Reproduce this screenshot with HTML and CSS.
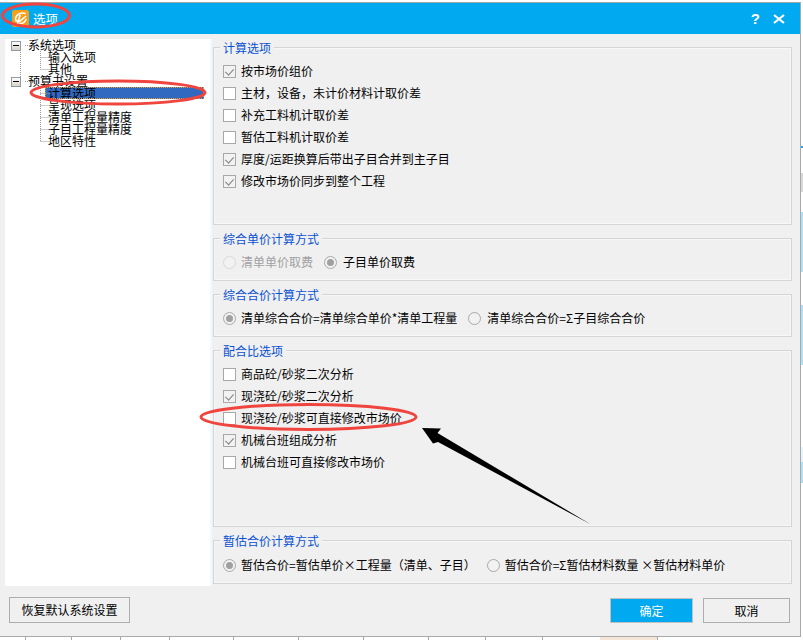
FILE: index.html
```html
<!DOCTYPE html>
<html lang="zh-CN">
<head>
<meta charset="utf-8">
<title>选项</title>
<link rel="stylesheet" href="styles.css">
</head>
<body>
<div class="page">
  <div class="upper">
    <div class="window">
      <header class="titlebar">
        <svg class="appicon" width="17" height="17" viewBox="0 0 17 17">
          <rect width="17" height="17" rx="2.500" fill="#f9a01b"/>
          <path d="M13 3.500C9 2 4 4.500 3.500 8.500c-.3 2.500 2.500 3.500 4.500 2.500l5.500-4.500M8 5.500L5.500 14M14 9.500c-1 2.500-3.500 4-6 4" fill="none" stroke="#fff" stroke-width="1.600" stroke-linecap="round"/>
        </svg>
        <span class="title">选项</span>
        <span class="help">?</span>
        <svg class="close" width="12" height="10" viewBox="0 0 12 10">
          <path d="M1 1l10 8M11 1L1 9" stroke="#fff" stroke-width="2.200" fill="none"/>
        </svg>
      </header>

      <div class="main">
        <nav class="tree">
          <svg class="guides" width="60" height="110" viewBox="0 0 60 110">
            <path d="M10.500 11V38M15 6.500H21M15 42.500H21M30.500 12V30.500M30.500 18.500H41M30.500 30.500H41M30.500 47V102.500M30.500 54.500H41M30.500 66.500H41M30.500 78.500H41M30.500 90.500H41M30.500 102.500H41" stroke="#9a9a9a" stroke-dasharray="1 1" fill="none"/>
          </svg>
          <div class="node root"><span class="exp"></span>系统选项</div>
          <div class="node leaf">输入选项</div>
          <div class="node leaf">其他</div>
          <div class="node root"><span class="exp"></span>预算书设置</div>
          <div class="node leaf sel"><span>计算选项</span></div>
          <div class="node leaf">呈现选项</div>
          <div class="node leaf">清单工程量精度</div>
          <div class="node leaf">子目工程量精度</div>
          <div class="node leaf">地区特性</div>
        </nav>

        <div class="groups">
          <section class="group tall">
            <h3 class="legend">计算选项</h3>
            <div class="row"><span class="box on"></span><span>按市场价组价</span></div>
            <div class="row"><span class="box"></span><span>主材，设备，未计价材料计取价差</span></div>
            <div class="row"><span class="box"></span><span>补充工料机计取价差</span></div>
            <div class="row"><span class="box"></span><span>暂估工料机计取价差</span></div>
            <div class="row"><span class="box on"></span><span>厚度/运距换算后带出子目合并到主子目</span></div>
            <div class="row"><span class="box on"></span><span>修改市场价同步到整个工程</span></div>
          </section>

          <section class="group short">
            <h3 class="legend">综合单价计算方式</h3>
            <div class="row">
              <span class="radio off"></span><span class="muted">清单单价取费</span>
              <span class="radio on next"></span><span>子目单价取费</span>
            </div>
          </section>

          <section class="group short">
            <h3 class="legend">综合合价计算方式</h3>
            <div class="row">
              <span class="radio on"></span><span>清单综合合价=清单综合单价*清单工程量</span>
              <span class="radio next"></span><span>清单综合合价=Σ子目综合合价</span>
            </div>
          </section>

          <section class="group mix">
            <h3 class="legend">配合比选项</h3>
            <div class="row"><span class="box"></span><span>商品砼/砂浆二次分析</span></div>
            <div class="row"><span class="box on"></span><span>现浇砼/砂浆二次分析</span></div>
            <div class="row"><span class="box"></span><span>现浇砼/砂浆可直接修改市场价</span></div>
            <div class="row"><span class="box on"></span><span>机械台班组成分析</span></div>
            <div class="row"><span class="box"></span><span>机械台班可直接修改市场价</span></div>
          </section>

          <section class="group last">
            <h3 class="legend">暂估合价计算方式</h3>
            <div class="row">
              <span class="radio on"></span><span>暂估合价=暂估单价×工程量（清单、子目）</span>
              <span class="radio next wide"></span><span>暂估合价=Σ暂估材料数量&nbsp;×暂估材料单价</span>
            </div>
          </section>
        </div>
      </div>

      <footer class="footer">
        <button class="btn reset" type="button">恢复默认系统设置</button>
        <div class="actions">
          <button class="btn primary" type="button">确定</button>
          <button class="btn cancel" type="button">取消</button>
        </div>
      </footer>
    </div>
    <div class="edge-right"></div>
  </div>
  <div class="edge-bottom"></div>

  <svg class="marks" width="803" height="640" viewBox="0 0 803 640">
    <ellipse cx="36" cy="15.500" rx="33.500" ry="11.500" fill="none" stroke="#f0443f" stroke-width="3"/>
    <ellipse cx="118" cy="92.500" rx="87" ry="11.500" fill="none" stroke="#f0443f" stroke-width="3"/>
    <ellipse cx="308.500" cy="417" rx="107.500" ry="12.500" fill="none" stroke="#f0443f" stroke-width="3"/>
    <polygon points="422,428 441,428.500 437.500,433 591,524.500 438,442 433,443.500" fill="#000"/>
  </svg>
</div>
</body>
</html>
```
FILE: styles.css
```css
* { box-sizing: border-box; }
html, body { margin: 0; padding: 0; }
body {
  width: 803px;
  height: 640px;
  overflow: hidden;
  background: #fff;
  font: 12px/14px "Noto Sans CJK SC", "Liberation Sans", sans-serif;
  color: #000;
}
.page { position: relative; width: 803px; height: 640px; display: flex; flex-direction: column; }
.upper { display: flex; height: 637px; padding-top: 2px; }
.window {
  width: 801px;
  background: #f0f0f0;
  border-top: 1px solid #a9a9a9;
  border-right: 1px solid #a9a9a9;
  border-bottom: 1px solid #a9a9a9;
  display: flex;
  flex-direction: column;
}
.edge-right {
  flex: 1;
  margin-top: -2px;
  background: linear-gradient(to bottom,
    #fff 0 146px, #29a9e0 146px 148px, #fff 148px 173px, #d8d8d8 173px 192px,
    #fff 192px 212px, #aee0f7 212px 272px, #fff 272px 305px, #aee0f7 305px 365px,
    #fff 365px 447px, #e8f4fb 447px 462px, #aee0f7 462px 483px, #fff 483px);
}
.edge-bottom {
  height: 3px;
  background: linear-gradient(to right,
    #fff 0 25px, #a8a8a8 25px 26px, #fff 26px 71px, #a8a8a8 71px 72px,
    #fff 72px 120px, #a8a8a8 120px 121px, #fff 121px 169px, #a8a8a8 169px 170px,
    #fff 170px 233px, #a8a8a8 233px 234px, #fff 234px 298px, #a8a8a8 298px 299px,
    #fff 299px 363px, #a8a8a8 363px 364px, #fff 364px 428px, #a8a8a8 428px 429px,
    #fff 429px 485px, #a8a8a8 485px 486px, #fff 486px 542px, #a8a8a8 542px 543px,
    #fff 543px 600px, #f5e6d8 600px 657px, #a8a8a8 657px 658px, #fff 658px);
}

.titlebar {
  height: 31px;
  background: #01a9f1;
  color: #fff;
  display: flex;
  align-items: center;
  padding-left: 12px;
}
.appicon { flex: none; }
.title { margin-left: 4px; font-size: 12.500px; flex: 1; }
.help { font: bold 15px/16px "Liberation Sans", sans-serif; margin-right: 13px; }
.close { margin-right: 15px; }

.main { display: flex; padding-left: 5px; height: 552px; }
.tree {
  position: relative;
  width: 207px;
  height: 547px;
  margin-top: 5px;
  background: #fff;
  border-right: 2px solid #eefaff;
}
.guides { position: absolute; left: 5px; top: 0; }
.node { height: 12px; line-height: 12px; white-space: nowrap; display: flex; align-items: center; }
.root { padding-left: 23px; position: relative; }
.leaf { padding-left: 43px; }
.exp {
  position: absolute;
  left: 6px;
  top: 2px;
  width: 10px;
  height: 10px;
  border: 1px solid #8e9aa8;
  background: linear-gradient(#fff, #d8d2c4);
}
.exp::after { content: ""; position: absolute; left: 1px; top: 3px; width: 6px; height: 1px; background: #000; }
.sel { margin-left: 40px; padding-left: 3px; margin-right: 6px; background: #3168c0; outline: 1px dotted #e0a030; outline-offset: -1px; }

.groups { width: 579px; margin-left: 1px; padding-top: 13px; display: flex; flex-direction: column; gap: 13px; }
.group { border: 1px solid #d4d4d4; box-shadow: inset 0 0 0 1px #f7f7f7; padding-left: 9px; }
.tall { height: 178px; }
.short { height: 43px; }
.mix { height: 177px; }
.last { height: 44px; }
.last .legend { margin-bottom: 6px; }
.legend {
  width: fit-content;
  height: 14px;
  margin: -7px 0 5px -3px;
  padding: 0 3px;
  background: #f0f0f0;
  font-weight: 400;
  font-size: 12px;
  line-height: 14px;
  color: #0a50d2;
}
.row { height: 22px; display: flex; align-items: center; white-space: nowrap; }
.box {
  position: relative;
  flex: none;
  width: 13px;
  height: 13px;
  margin-right: 5px;
  border: 1px solid #a8a8a8;
  background: #fff;
}
.box.on { background: #f2f2f2; }
.box.on::after {
  content: "";
  position: absolute;
  left: 3px;
  top: 1px;
  width: 4px;
  height: 7px;
  border-right: 1.500px solid #808080;
  border-bottom: 1.500px solid #808080;
  transform: rotate(42deg);
}
.radio {
  position: relative;
  flex: none;
  width: 13px;
  height: 13px;
  margin-right: 5px;
  border: 1px solid #a8a8a8;
  border-radius: 50%;
  background: #f2f2f2;
}
.radio.on::after {
  content: "";
  position: absolute;
  left: 2px;
  top: 2px;
  width: 7px;
  height: 7px;
  border-radius: 50%;
  background: #a0a0a0;
}
.radio.off { border-color: #d8d8d8; }
.radio.next { margin-left: 11px; margin-right: 6px; }
.radio.wide { margin-left: 11px; margin-right: 5px; }
.muted { color: #a0a0a0; }

.footer { display: flex; justify-content: space-between; align-items: flex-start; padding: 11px 10px 0 9px; }
.actions { display: flex; gap: 10px; padding-top: 1px; }
.btn {
  height: 26px;
  padding: 0;
  border: 1px solid #adadad;
  background: #f0f0f0;
  font: inherit;
  color: #000;
}
.reset { width: 121px; }
.primary { width: 83px; height: 25px; background: #01a9f1; color: #fff; border-color: #c0c0c0; }
.cancel { width: 87px; height: 25px; }

.marks { position: absolute; left: 0; top: 0; pointer-events: none; }
```
